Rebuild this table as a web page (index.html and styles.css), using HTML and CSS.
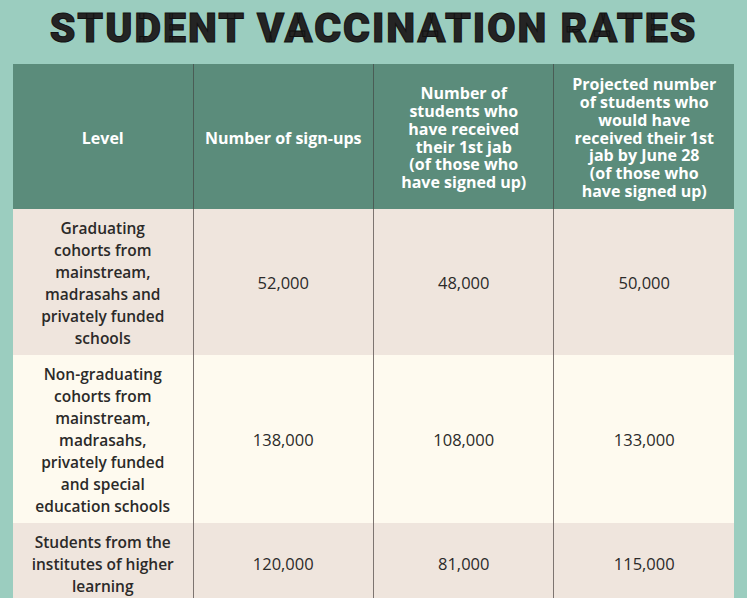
FILE: index.html
```html
<!DOCTYPE html>
<html lang="en">
<head>
<meta charset="utf-8">
<title>Student Vaccination Rates</title>
<link rel="stylesheet" href="styles.css">
</head>
<body>
<div class="page">
  <h1 class="title">STUDENT VACCINATION RATES</h1>
  <table class="rates">
    <thead>
      <tr>
        <th>Level</th>
        <th>Number of sign-ups</th>
        <th>Number of<br>students who<br>have received<br>their 1st jab<br>(of those who<br>have signed up)</th>
        <th>Projected number<br>of students who<br>would have<br>received their 1st<br>jab by June 28<br>(of those who<br>have signed up)</th>
      </tr>
    </thead>
    <tbody>
      <tr class="odd">
        <td class="level">Graduating<br>cohorts from<br>mainstream,<br>madrasahs and<br>privately funded<br>schools</td>
        <td>52,000</td>
        <td>48,000</td>
        <td>50,000</td>
      </tr>
      <tr class="even">
        <td class="level">Non-graduating<br>cohorts from<br>mainstream,<br>madrasahs,<br>privately funded<br>and special<br>education schools</td>
        <td>138,000</td>
        <td>108,000</td>
        <td>133,000</td>
      </tr>
      <tr class="odd">
        <td class="level">Students from the<br>institutes of higher<br>learning</td>
        <td>120,000</td>
        <td>81,000</td>
        <td>115,000</td>
      </tr>
    </tbody>
  </table>
</div>
</body>
</html>
```
FILE: styles.css
```css
html, body {
  margin: 0;
  padding: 0;
  background: #9bcdbf;
}
.page {
  padding: 0 13px;
  font-family: "Open Sans", Lato, sans-serif;
}
.title {
  margin: 0;
  height: 64px;
  line-height: 56px;
  text-align: center;
  font-family: Roboto, "Liberation Sans", sans-serif;
  font-weight: 900;
  font-size: 41px;
  letter-spacing: 2px;
  color: #242424;
  -webkit-text-stroke: 1px #111;
}
.rates {
  width: 721px;
  border-collapse: collapse;
  table-layout: fixed;
}
.rates th, .rates td {
  width: 25%;
  text-align: center;
  vertical-align: middle;
  border-left: 1px solid #7d7470;
}
.rates th:first-child, .rates td:first-child {
  border-left: none;
}
.rates th {
  background: #5b8c7b;
  color: #fff;
  font-weight: 700;
  font-size: 16px;
  line-height: 17.8px;
  height: 125px;
  padding: 12px 2px 8px;
  border-left-color: #4a5c55;
}
.rates td {
  color: #2b2a29;
  font-size: 16.5px;
  font-weight: 400;
  line-height: 22px;
  padding: 8px 2px 6px;
}
.rates td.level {
  font-weight: 600;
  font-size: 15.5px;
}
.odd td { background: #efe5dd; }
.even td { background: #fefaef; }
```
